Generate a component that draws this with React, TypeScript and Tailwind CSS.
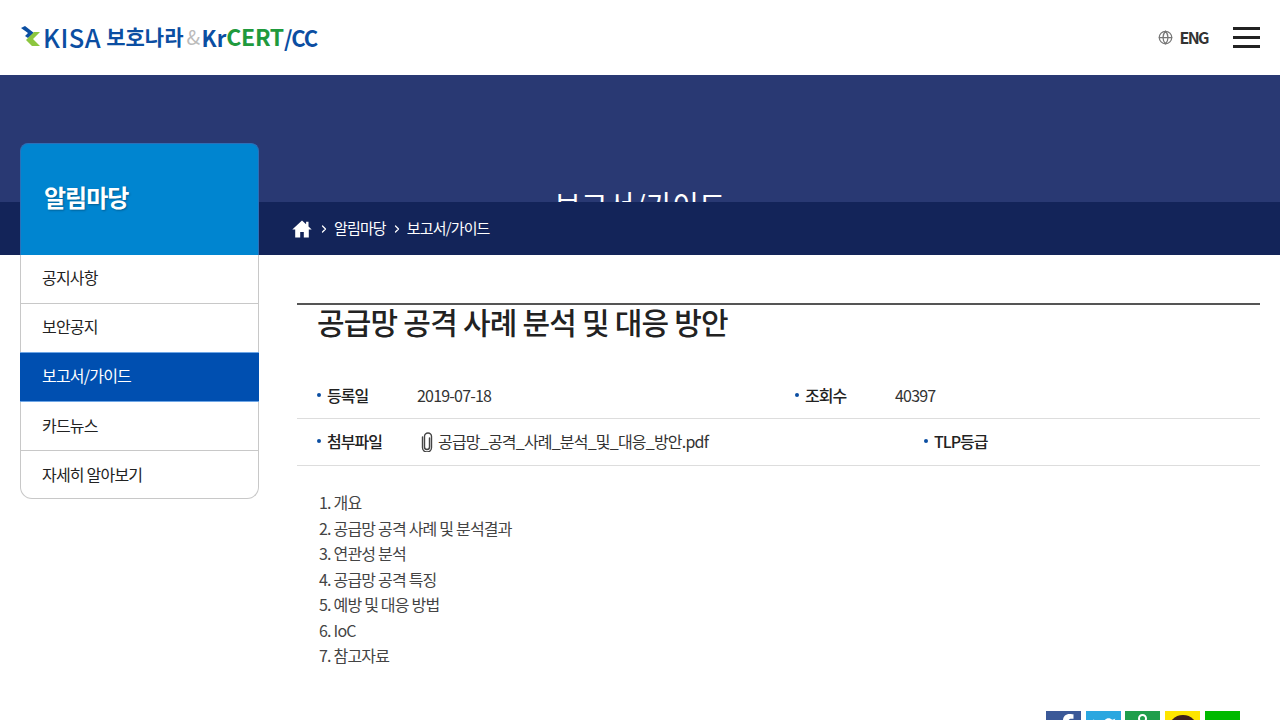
import React from 'react';
import { ChevronRight, Globe } from 'lucide-react';
import { FaFacebookF, FaTwitter } from 'react-icons/fa';

const menu = [
  { label: '공지사항', cls: 'h-[49px] pb-1 text-[#222222] border-x border-b border-[#c8c8c8]' },
  { label: '보안공지', cls: 'h-[48px] pb-1 text-[#222222] border-x border-[#c8c8c8]' },
  { label: '보고서/가이드', cls: 'h-[50px] pb-1 text-white bg-[#004fb0] border-y border-[#6ea6e6] pl-[22px]' },
  { label: '카드뉴스', cls: 'h-[49px] pb-[3px] text-[#222222] border-x border-b border-[#c8c8c8]' },
  { label: '자세히 알아보기', cls: 'h-[48px] pb-[2px] text-[#222222] border-x border-b border-[#c8c8c8] rounded-b-xl' },
];
const toc = ['1. 개요', '2. 공급망 공격 사례 및 분석결과', '3. 연관성 분석', '4. 공급망 공격 특징', '5. 예방 및 대응 방법', '6. IoC', '7. 참고자료'];

function Logo() {
  return (
    <div className="flex items-center -mt-[2px]">
      <svg width="22" height="22" viewBox="0 0 22 22" className="mr-[2px]">
        <path d="M1 2L5 0l9 7-6 5-3-2 3-3z" fill="#0b4ea2" />
        <path d="M20 6h-6L6 14l6 6h8l-7-7z" fill="#8cc63f" />
      </svg>
      <span className="-ml-px text-[25.5px] leading-none font-medium text-[#0b4ea2] tracking-[0.5px]">KISA</span>
      <span className="ml-[5px] text-[21px] leading-none font-bold text-[#0b4ea2] tracking-[0px]">보호나라</span>
      <span className="ml-[3px] text-[20px] leading-none text-[#bbbbbb] tracking-[-0.5px]">&amp;</span>
      <span className="ml-[2px] text-[22px] leading-none font-bold text-[#0b4ea2]">Kr</span>
      <span className="text-[23px] leading-none font-bold text-[#1f9a3d] tracking-[-0.3px]">CERT</span>
      <span className="text-[22px] leading-none font-bold text-[#0b4ea2] tracking-[-1px]">/CC</span>
    </div>
  );
}

function Header() {
  return (
    <header className="h-[75px] bg-white flex items-center justify-between pl-5 pr-[20px]">
      <Logo />
      <div className="flex items-center">
        <Globe className="w-[15px] h-[15px] text-[#777777]" strokeWidth={2} />
        <span className="ml-[7px] -mt-[2px] text-[16px] font-bold text-[#333333] tracking-[-1.6px]">ENG</span>
        <div className="ml-[25px] w-[27px] flex flex-col gap-[6px]">
          <div className="h-[3px] bg-[#222222]" />
          <div className="h-[3px] bg-[#222222]" />
          <div className="h-[3px] bg-[#222222]" />
        </div>
      </div>
    </header>
  );
}

function Banner() {
  return (
    <section className="relative h-[180px] bg-[#293973] overflow-hidden">
      <h2 className="pt-[109px] text-center text-[29px] leading-[40px] text-white">보고서/가이드</h2>
      <div className="absolute left-0 right-0 bottom-0 h-[53px] bg-[#132459] flex items-center pl-[293px] text-[15px] text-white tracking-[-0.85px]">
        <svg width="20" height="18" viewBox="0 0 20 18" fill="#ffffff" className="-ml-px">
          <path d="M10 .5L.3 9.5h2.9V17.5h5v-5.5h3.6v5.5h5V9.5h2.9l-3.2-3V1.8h-2.4v2.5z" />
        </svg>
        <ChevronRight className="ml-[6px] w-[12px] h-[12px]" strokeWidth={2.5} />
        <span className="ml-[4px]">알림마당</span>
        <ChevronRight className="ml-[5px] w-[12px] h-[12px]" strokeWidth={2.5} />
        <span className="ml-[4px]">보고서/가이드</span>
      </div>
    </section>
  );
}

function Sidebar() {
  return (
    <aside className="relative z-10 ml-5 -mt-[112px] w-[239px] shrink-0 self-start">
      <div className="h-[112px] pb-[6px] bg-[#0085d0] rounded-t-lg flex items-center pl-6 border border-b-0 border-[#2c6fb8]">
        <h3 className="-ml-px text-[24px] font-bold text-white tracking-[-1px] [text-shadow:1px_1px_2px_rgba(0,0,0,0.3)]">알림마당</h3>
      </div>
      <ul className="bg-white">
        {menu.map((m) => (
          <li key={m.label} className={`flex items-center pl-[21px] text-[16px] tracking-[-0.8px] ${m.cls}`}>
            {m.label}
          </li>
        ))}
      </ul>
    </aside>
  );
}

function Label({ children }: { children: React.ReactNode }) {
  return (
    <span className="flex items-center text-[16px] font-medium text-[#222222] tracking-[-1px]">
      <span className="w-1 h-1 rounded-full bg-[#0b4ea2] mr-[6px]" />
      {children}
    </span>
  );
}

function Clip() {
  return (
    <svg width="12" height="20" viewBox="0 0 12 20" fill="none" stroke="#444444" strokeWidth="1.4" strokeLinecap="round" className="ml-[4px] mr-[5px] mt-[2px]">
      <path d="M8.5 6v9a2.5 2.5 0 0 1-5 0V4.5a3.5 3.5 0 0 1 7 0V15" />
      <path d="M1.5 5v10.5a4.5 4.5 0 0 0 9 0" />
    </svg>
  );
}

function Article() {
  return (
    <main className="flex-1 ml-[38px] mr-5 pt-12">
      <div className="border-t-2 border-[#555555] pl-5 h-[42px]">
        <h1 className="text-[30px] leading-[33px] font-medium text-[#222222] tracking-[-0.8px]">공급망 공격 사례 분석 및 대응 방안</h1>
      </div>
      <div className="mt-[28px] h-[46px] pb-[2px] flex items-center border-b border-[#dddddd] pl-5">
        <div className="w-[100px]"><Label>등록일</Label></div>
        <span className="w-[378px] text-[16px] text-[#333333] tracking-[-0.8px]">2019-07-18</span>
        <div className="w-[100px]"><Label>조회수</Label></div>
        <span className="text-[16px] text-[#333333] tracking-[-0.8px]">40397</span>
      </div>
      <div className="h-[47px] pb-[2px] flex items-center border-b border-[#dddddd] pl-5">
        <div className="w-[100px]"><Label>첨부파일</Label></div>
        <span className="w-[507px] flex items-center text-[16px] text-[#333333] tracking-[-0.8px]">
          <Clip />
          공급망_공격_사례_분석_및_대응_방안.pdf
        </span>
        <Label>TLP등급</Label>
      </div>
      <ul className="mt-6 pl-[22px] text-[16px] leading-[25.5px] text-[#444444] tracking-[-0.8px]">
        {toc.map((t) => (
          <li key={t}>{t}</li>
        ))}
      </ul>
      <div className="mt-[42px] mr-5 flex justify-end gap-[5px]">
        <div className="w-[35px] h-[35px] bg-[#3b5998] flex items-center justify-center text-white"><FaFacebookF className="w-7 h-7 ml-1" /></div>
        <div className="w-[35px] h-[35px] bg-[#2ba7e0] flex items-center justify-center text-white"><FaTwitter className="w-6 h-6" /></div>
        <div className="-ml-px w-[35px] h-[35px] bg-[#1f9e4b] flex justify-center pt-[3px]"><div className="w-[9px] h-[9px] rounded-full border-2 border-white" /></div>
        <div className="w-[35px] h-[35px] bg-[#fee500] flex justify-center pt-[4px]"><div className="w-[30px] h-[30px] rounded-full bg-[#3c1e1e]" /></div>
        <div className="w-[35px] h-[35px] bg-[#00b900]" />
      </div>
    </main>
  );
}

export default function App() {
  return (
    <div className="h-[720px] overflow-hidden bg-white font-['Noto_Sans_CJK_KR','Noto_Sans',sans-serif]">
      <Header />
      <Banner />
      <div className="flex">
        <Sidebar />
        <Article />
      </div>
    </div>
  );
}
